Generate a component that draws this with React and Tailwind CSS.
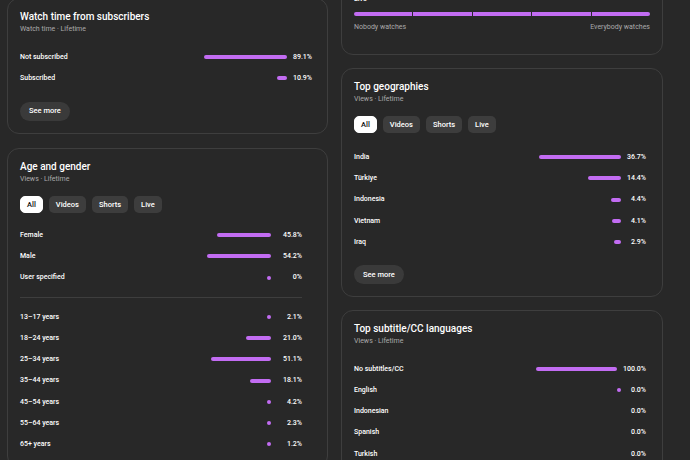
const PURPLE = "bg-[#c26cf2]";

const watchRows = [
  { label: "Not subscribed", value: "89.1%", w: 83 },
  { label: "Subscribed", value: "10.9%", w: 10 },
];

const genderRows = [
  { label: "Female", value: "45.8%", w: 54 },
  { label: "Male", value: "54.2%", w: 64 },
  { label: "User specified", value: "0%", w: 4 },
];

const ageRows = [
  { label: "13–17 years", value: "2.1%", w: 4 },
  { label: "18–24 years", value: "21.0%", w: 25 },
  { label: "25–34 years", value: "51.1%", w: 60 },
  { label: "35–44 years", value: "18.1%", w: 21 },
  { label: "45–54 years", value: "4.2%", w: 4 },
  { label: "55–64 years", value: "2.3%", w: 4 },
  { label: "65+ years", value: "1.2%", w: 4 },
];

const geoRows = [
  { label: "India", value: "36.7%", w: 82 },
  { label: "Türkiye", value: "14.4%", w: 33 },
  { label: "Indonesia", value: "4.4%", w: 10 },
  { label: "Vietnam", value: "4.1%", w: 9 },
  { label: "Iraq", value: "2.9%", w: 7 },
];

const subRows = [
  { label: "No subtitles/CC", value: "100.0%", w: 81 },
  { label: "English", value: "0.0%", w: 4 },
  { label: "Indonesian", value: "0.0%", w: 0 },
  { label: "Spanish", value: "0.0%", w: 0 },
  { label: "Turkish", value: "0.0%", w: 0 },
];

function Card({ className = "", children }) {
  return (
    <div className={"rounded-[12px] border border-[#3e3e3e] bg-[#282828] pt-[11px] pl-[12px] " + className}>
      {children}
    </div>
  );
}

function Header({ title, sub }) {
  return (
    <div>
      <div className="h-[13px] text-[10px] leading-[13px] font-medium text-white">{title}</div>
      <div className="h-[12px] text-[7px] leading-[12px] text-[#aaaaaa]">{sub}</div>
    </div>
  );
}

function Chips() {
  return (
    <div className="mt-[11px] flex gap-[6px]">
      <span className="flex h-[17px] items-center rounded-[5px] border border-white bg-white px-[6px] text-[7.5px] font-medium text-[#0f0f0f]">All</span>
      {["Videos", "Shorts", "Live"].map((c) => (
        <span key={c} className="flex h-[17px] items-center rounded-[5px] bg-[#3d3d3d] px-[7px] text-[7.5px] font-medium text-white">
          {c}
        </span>
      ))}
    </div>
  );
}

function Row({ label, value, w, wide }) {
  return (
    <div className="flex h-[21.25px] items-center text-[7px] font-medium text-white">
      <span className="flex-1">{label}</span>
      {w > 0 && <span className={"h-[4px] rounded-full " + PURPLE} style={{ width: w }} />}
      <span className={"min-w-[19px] text-right " + (wide ? "ml-[12px]" : "ml-[6px]")}>{value}</span>
    </div>
  );
}

function SeeMore() {
  return (
    <button className="mt-[12.5px] flex h-[19px] items-center rounded-full bg-[#3a3a3a] px-[9px] text-[7.5px] font-medium text-white">
      See more
    </button>
  );
}

export default function App() {
  return (
    <div className="h-[460px] w-[690px] overflow-hidden bg-[#282828] font-['Roboto','Liberation_Sans',sans-serif]">
      <div className="flex items-start gap-[13px] pl-[7px]">
        {/* left column */}
        <div className="mt-[-2px] flex w-[321px] flex-col gap-[14px]">
          <Card className="pr-[15px] pb-[12.5px]">
            <Header title="Watch time from subscribers" sub="Watch time · Lifetime" />
            <div className="mt-[11.5px]">
              {watchRows.map((r) => (
                <Row key={r.label} {...r} />
              ))}
            </div>
            <SeeMore />
          </Card>

          <Card className="pr-[25px] pb-[12px]">
            <Header title="Age and gender" sub="Views · Lifetime" />
            <Chips />
            <div className="mt-[11.5px]">
              {genderRows.map((r) => (
                <Row key={r.label} {...r} wide />
              ))}
            </div>
            <div className="my-[8.5px] h-px bg-[#3e3e3e]" />
            <div>
              {ageRows.map((r) => (
                <Row key={r.label} {...r} wide />
              ))}
            </div>
          </Card>
        </div>

        {/* right column */}
        <div className="mt-[-54.5px] flex w-[322px] flex-col gap-[13px]">
          <Card className="pr-[12px] pb-[21px]">
            <Header title="Content type" sub="Views · Lifetime" />
            <div className="mt-[10.5px] h-[12px] text-[7px] leading-[12px] font-medium text-white">Live</div>
            <div className="mt-[7px] flex h-[4px] gap-[1px]">
              <span className={"flex-1 rounded-l-full " + PURPLE} />
              <span className={"flex-1 " + PURPLE} />
              <span className={"flex-1 " + PURPLE} />
              <span className={"flex-1 " + PURPLE} />
              <span className={"flex-1 rounded-r-full " + PURPLE} />
            </div>
            <div className="mt-[5px] flex h-[12px] justify-between text-[7px] leading-[12px] text-[#aaaaaa]">
              <span>Nobody watches</span>
              <span>Everybody watches</span>
            </div>
          </Card>

          <Card className="pr-[16px] pb-[12px]">
            <Header title="Top geographies" sub="Views · Lifetime" />
            <Chips />
            <div className="mt-[13.5px]">
              {geoRows.map((r) => (
                <Row key={r.label} {...r} />
              ))}
            </div>
            <SeeMore />
          </Card>

          <Card className="pr-[16px] pb-[12px]">
            <Header title="Top subtitle/CC languages" sub="Views · Lifetime" />
            <div className="mt-[11px]">
              {subRows.map((r) => (
                <Row key={r.label} {...r} />
              ))}
            </div>
          </Card>
        </div>
      </div>
    </div>
  );
}
